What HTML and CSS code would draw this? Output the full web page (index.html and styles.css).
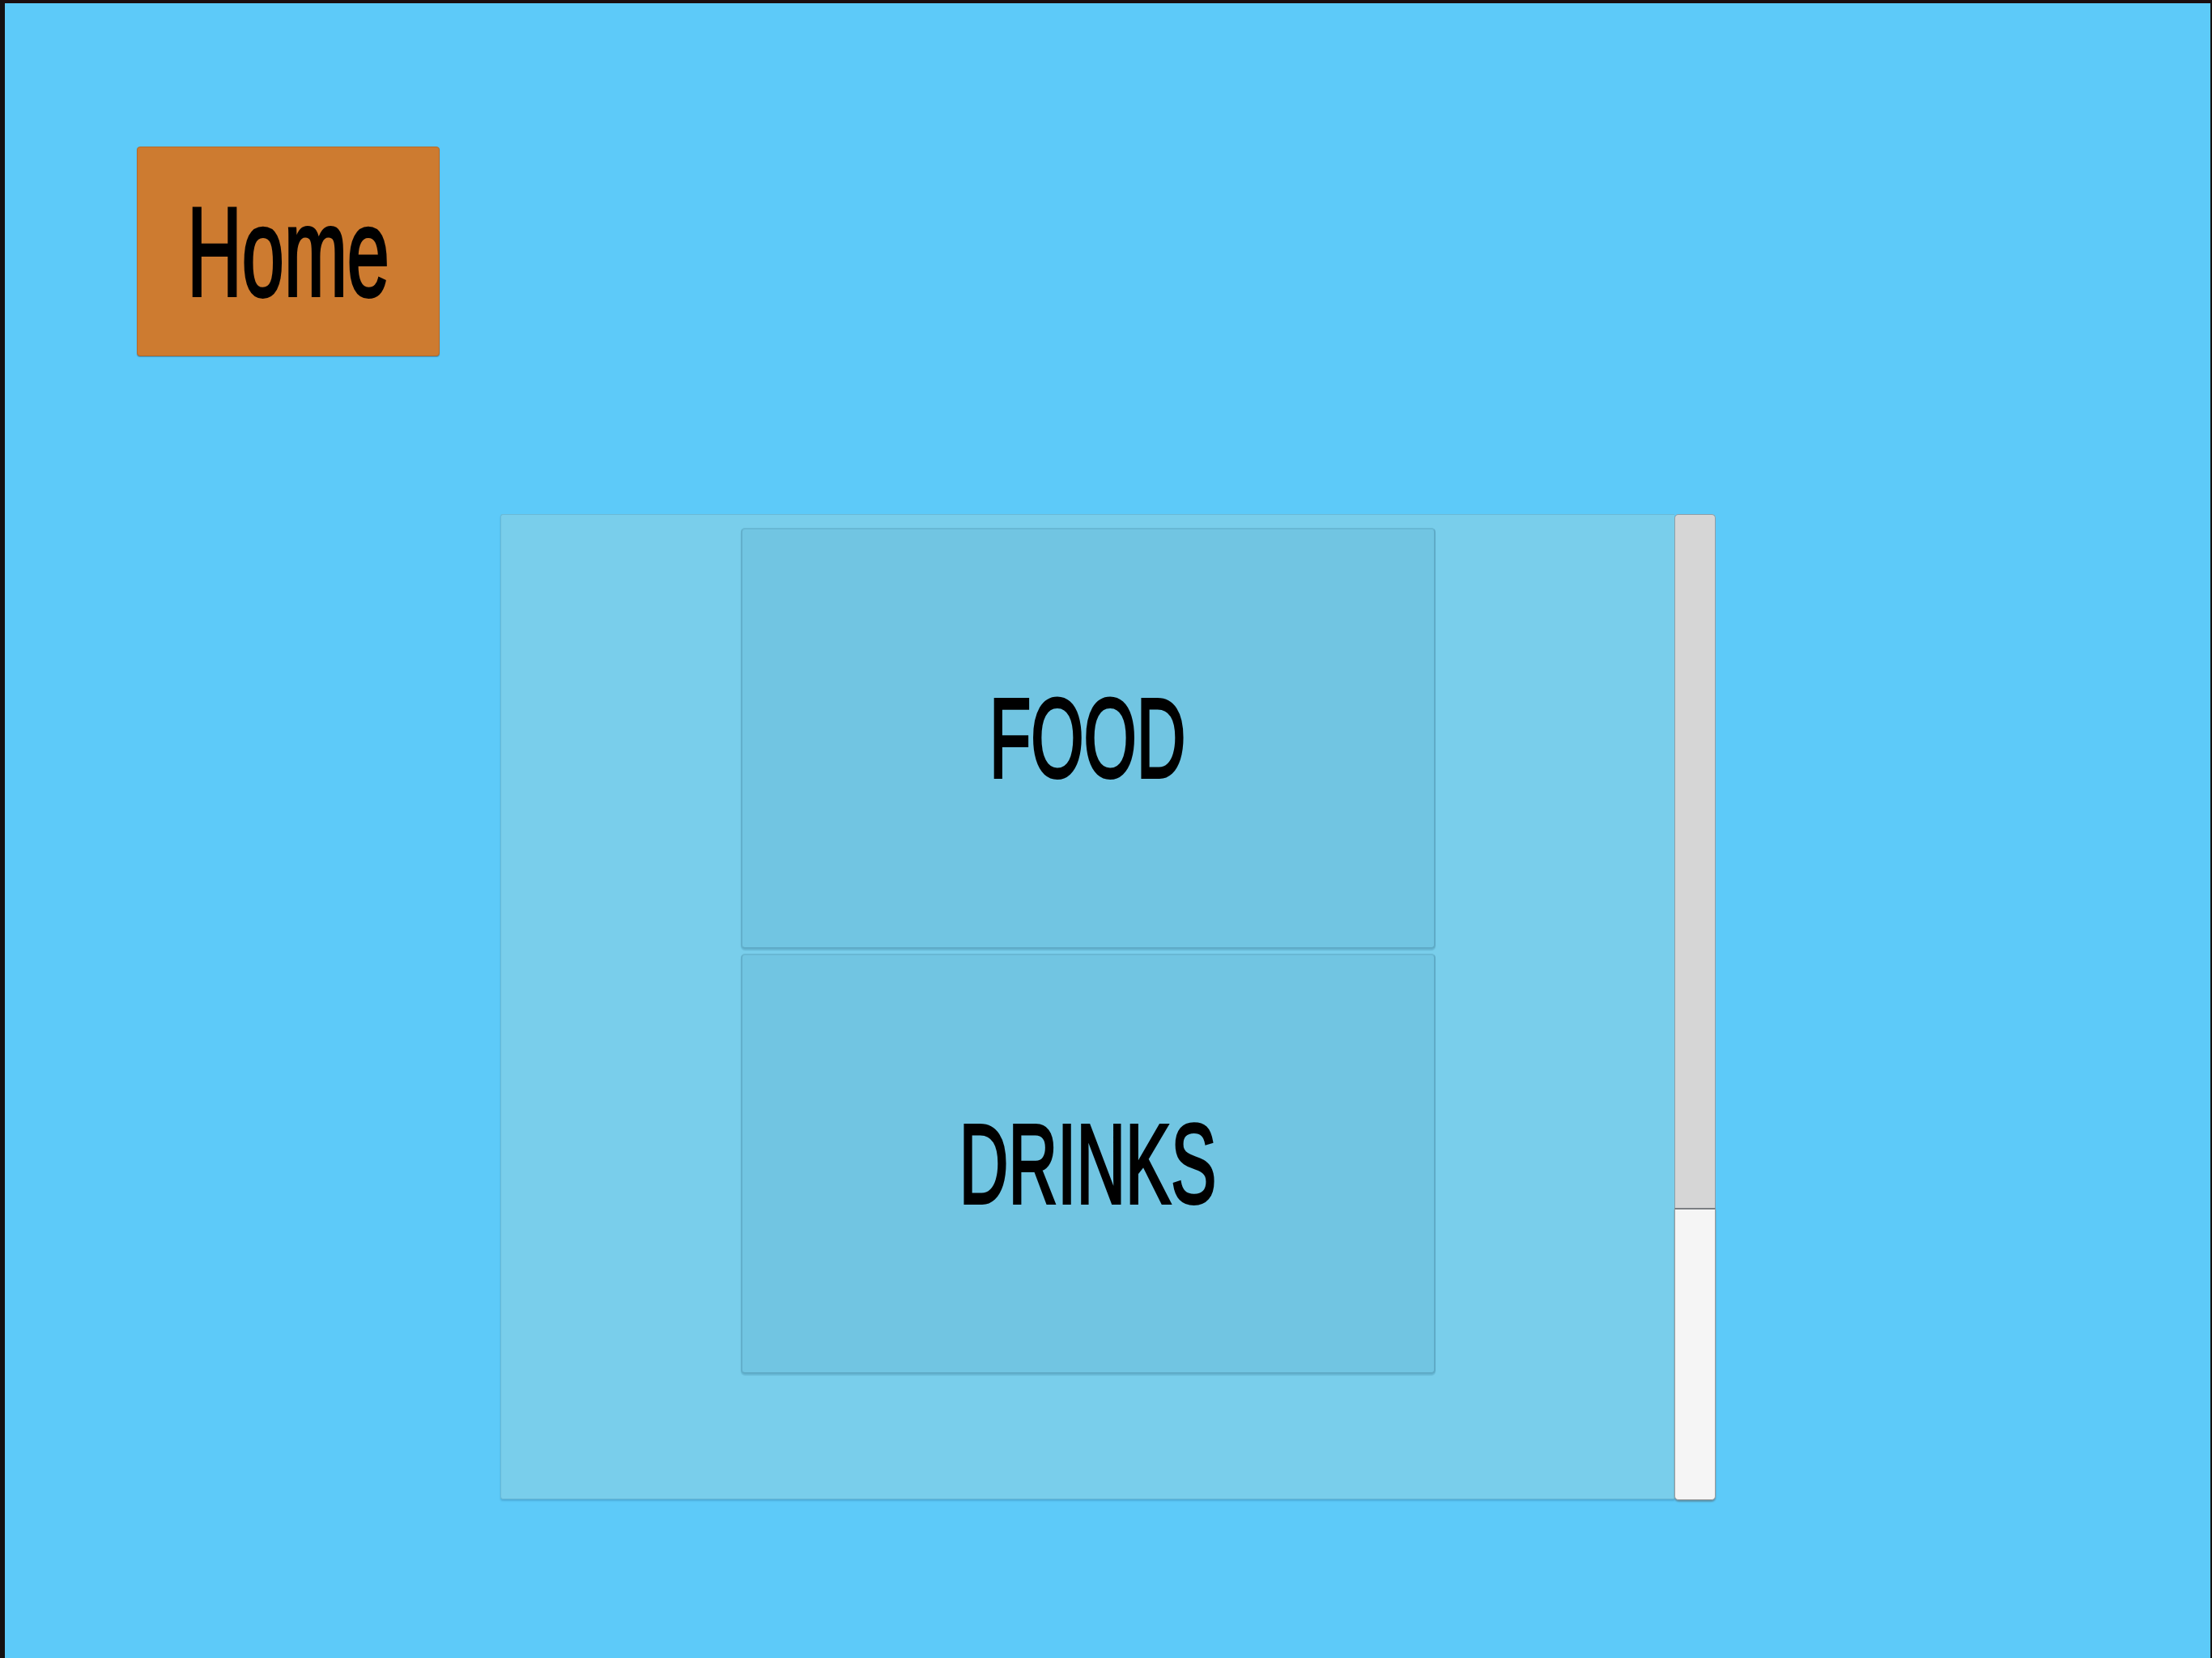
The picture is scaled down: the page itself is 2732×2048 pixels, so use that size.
FILE: index.html
```html
<!DOCTYPE html>
<html>
<head>
<meta charset="utf-8">
<link rel="stylesheet" href="styles.css">
</head>
<body>
<div class="screen">
  <button class="home"><span class="label label-home">Home</span></button>
  <div class="stage">
    <div class="panel">
      <button class="menu-btn"><span class="label">FOOD</span></button>
      <button class="menu-btn"><span class="label">DRINKS</span></button>
    </div>
    <div class="scrollbar">
      <div class="track"></div>
      <div class="handle"></div>
    </div>
  </div>
</div>
</body>
</html>
```
FILE: styles.css
```css
html, body {
  margin: 0;
  padding: 0;
  background: #5cc9f8;
}

.screen {
  width: 2732px;
  height: 2048px;
  box-sizing: border-box;
  border-top: 4px solid #1b0e10;
  border-left: 6px solid #151112;
  border-right: 2px solid #151112;
  background: #5dcaf9;
  padding: 177px 0 0 163px;
  display: flex;
  flex-direction: column;
  align-items: flex-start;
  font-family: "Liberation Sans", Arial, sans-serif;
  overflow: hidden;
}

.home {
  width: 374px;
  height: 259px;
  box-sizing: border-box;
  background: #cd7b30;
  border: 1px solid #b46a2a;
  border-radius: 4px;
  box-shadow: 0 1px 1px rgba(40, 90, 120, 0.5);
  padding: 0;
  margin: 0;
  display: flex;
  align-items: center;
  justify-content: center;
  font-family: inherit;
  cursor: pointer;
}

.label {
  display: inline-block;
  font-size: 140px;
  line-height: 1;
  color: #000;
  -webkit-text-stroke: 4px #000;
  transform: scaleX(0.6);
  white-space: nowrap;
}

.label-home {
  font-size: 156px;
}

.stage {
  margin-top: 195px;
  margin-left: 449px;
  display: flex;
  align-items: flex-start;
}

.panel {
  width: 1450px;
  height: 1217px;
  box-sizing: border-box;
  background: #79ceeb;
  border: 1px solid #6ab9d6;
  border-right: none;
  border-radius: 3px 0 0 3px;
  box-shadow: 0 2px 2px rgba(60, 140, 180, 0.45);
  padding-top: 16px;
  display: flex;
  flex-direction: column;
  align-items: center;
  gap: 6px;
}

.menu-btn {
  width: 858px;
  height: 520px;
  box-sizing: border-box;
  background: #71c5e2;
  border: 2px solid #5fabc7;
  border-top-color: #68b8d4;
  border-left-color: #62afcb;
  border-radius: 5px;
  box-shadow: 0 2px 1px rgba(70, 140, 170, 0.35);
  padding: 0;
  margin: 0;
  display: flex;
  align-items: center;
  justify-content: center;
  font-family: inherit;
  cursor: pointer;
}

.menu-btn + .menu-btn {
  height: 519px;
}

.scrollbar {
  width: 51px;
  height: 1218px;
  display: flex;
  flex-direction: column;
}

.track {
  height: 857px;
  box-sizing: border-box;
  background: #d6d6d6;
  border: 1px solid #8e9ea6;
  border-bottom: none;
  border-radius: 5px 5px 0 0;
}

.handle {
  flex: 1;
  box-sizing: border-box;
  background: #f5f5f5;
  border: 1px solid #9a9a9a;
  border-top: 2px solid #7b7f82;
  border-radius: 0 0 5px 5px;
  box-shadow: 0 2px 2px rgba(80, 80, 80, 0.45);
}
```
